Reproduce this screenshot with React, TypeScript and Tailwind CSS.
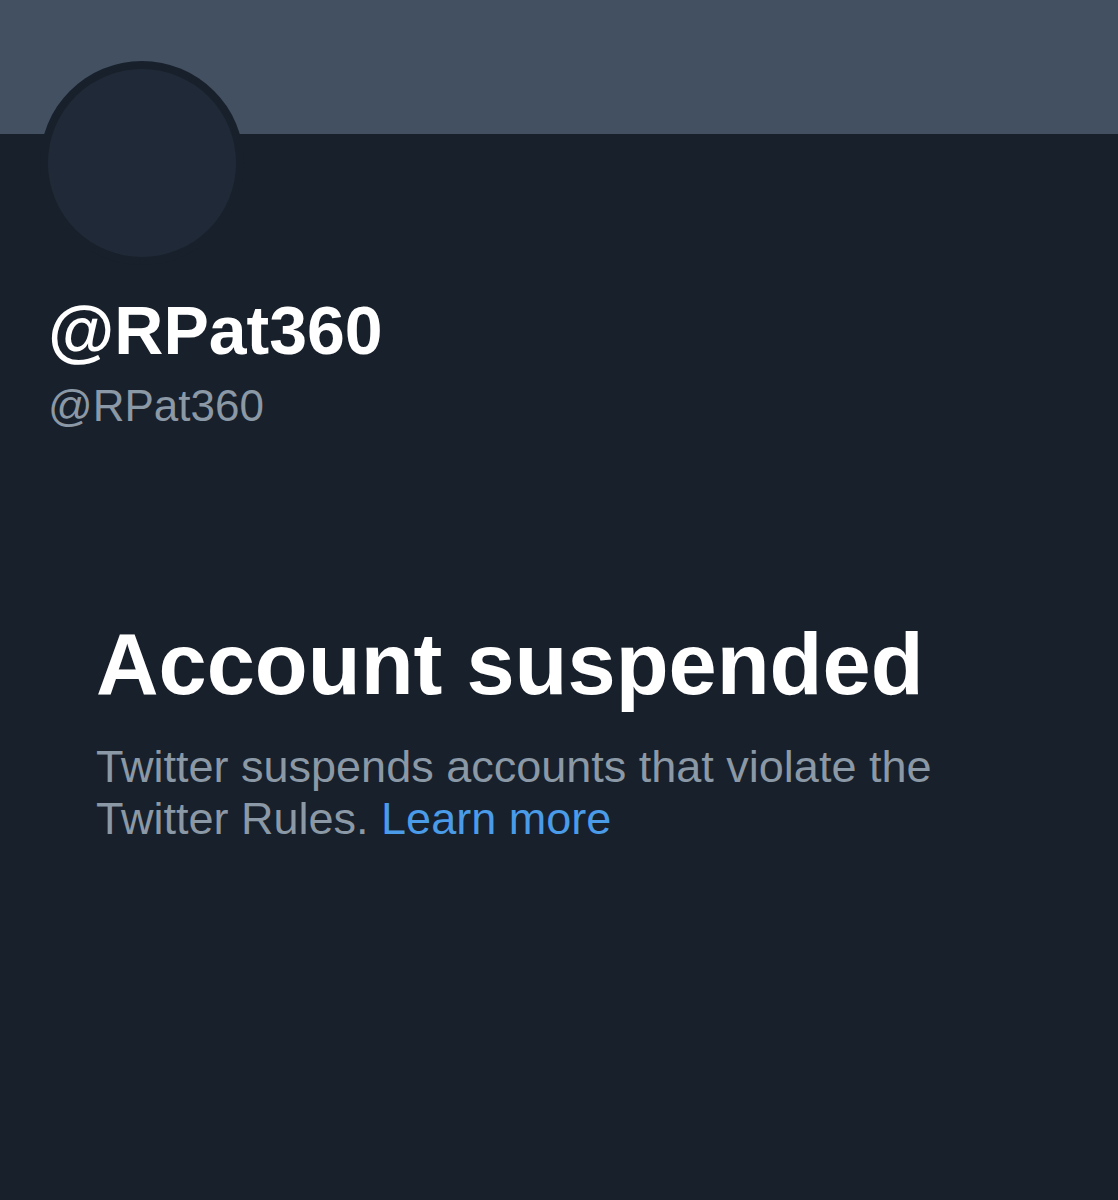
export default function App() {
  return (
    <div className="w-[1118px] h-[1200px] bg-[#18202b] overflow-hidden" style={{ fontFamily: '"Liberation Sans", Arial, sans-serif' }}>
      <div className="h-[134px] bg-[#425061]" />
      <div className="pl-[40px]">
        <div className="mt-[-73px] w-[204px] h-[204px] rounded-full bg-[#18202b] p-[8px]">
          <div className="w-full h-full rounded-full bg-[#202937]" />
        </div>
      </div>
      <div className="pl-[48px]">
        <div className="mt-[32px] text-[68px] leading-[67px] font-bold text-white">@RPat360</div>
        <div className="mt-[20px] text-[44px] leading-[44px] text-[#8b98a5]">@RPat360</div>
      </div>
      <div className="pl-[96px]">
        <div className="mt-[193px] text-[86.6px] leading-[87px] font-bold text-white">Account suspended</div>
        <p className="mt-[33px] w-[880px] text-[45px] leading-[52px] text-[#8b98a5]">
          <span className="block">Twitter suspends accounts that violate the</span>
          <span className="block">
            Twitter Rules. <span className="text-[#4a9be8]">Learn more</span>
          </span>
        </p>
      </div>
    </div>
  );
}
